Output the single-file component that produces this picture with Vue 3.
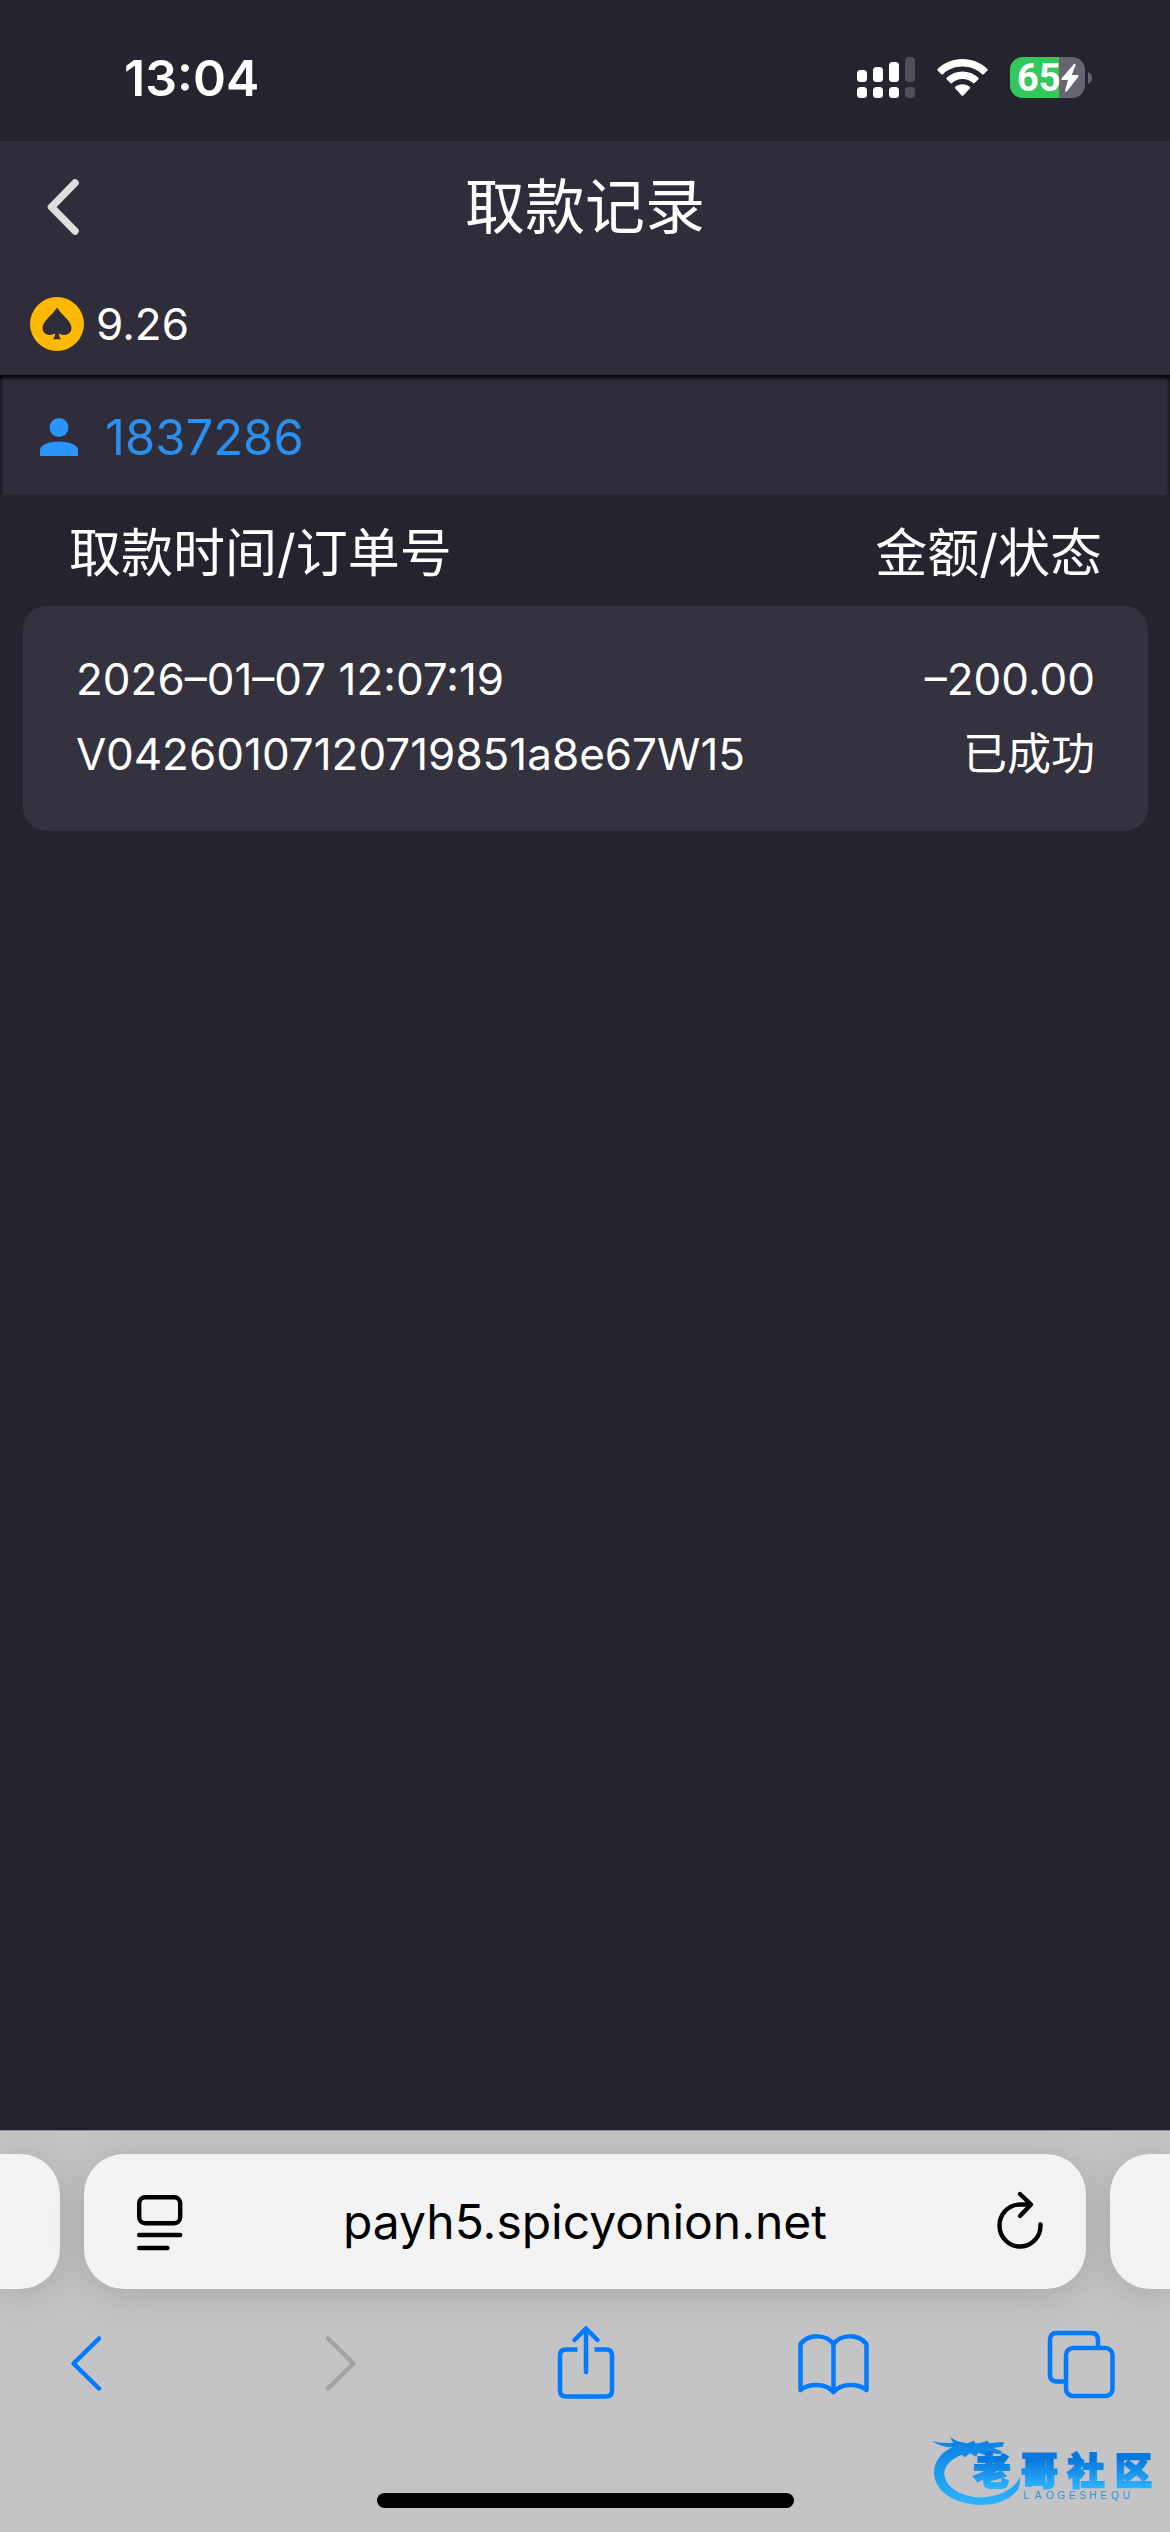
<script setup>
const account = { balance: '9.26', id: '1837286' }
const records = [
  {
    time: '2026–01–07 12:07:19',
    order: 'V04260107120719851a8e67W15',
    amount: '–200.00',
    status: '已成功',
  },
]
const battery = 65
</script>

<template>
  <div class="screen">
    <div class="status-bar">
      <time class="clock">13:04</time>
      <div class="indicators">
        <svg class="signal" viewBox="0 0 58 41" aria-label="信号">
          <g fill="#fff">
            <rect x="0" y="13" width="10" height="12" rx="3.5" />
            <rect x="16" y="10" width="10" height="15" rx="3.5" />
            <rect x="32" y="5" width="10" height="20" rx="3.5" />
            <rect x="0" y="30" width="10" height="11" rx="3.5" />
            <rect x="16" y="30" width="10" height="11" rx="3.5" />
            <rect x="32" y="30" width="10" height="11" rx="3.5" />
          </g>
          <g fill="#504f59">
            <rect x="48" y="0" width="10" height="25" rx="3.5" />
            <rect x="48" y="30" width="10" height="11" rx="3.5" />
          </g>
        </svg>
        <svg class="wifi" viewBox="0 0 51 37" aria-label="Wi-Fi">
          <g fill="#fff">
            <path d="M25.500 0C35 0 43.500 3.600 50.200 9.700Q51.200 10.700 50.200 11.700L46.700 15.200Q45.900 16 45 15.200C39.700 10.300 33 7.600 25.500 7.600S11.300 10.300 6 15.200Q5.100 16 4.300 15.200L.8 11.700Q-.2 10.700.8 9.700C7.500 3.600 16 0 25.500 0Z" />
            <path d="M25.500 12.600C31.500 12.600 36.900 14.800 41.200 18.600Q42.100 19.500 41.200 20.500L37.600 24Q36.800 24.800 35.900 24C33 21.500 29.500 20.100 25.500 20.100S18 21.500 15.100 24Q14.200 24.800 13.400 24L9.800 20.500Q8.900 19.500 9.800 18.600C14.100 14.800 19.500 12.600 25.500 12.600Z" />
            <path d="M25.500 25.300C28.300 25.300 30.800 26.200 32.700 27.800Q33.600 28.700 32.700 29.600L26.600 36.200Q25.500 37.200 24.400 36.200L18.300 29.600Q17.400 28.700 18.300 27.800C20.200 26.200 22.700 25.300 25.500 25.300Z" />
          </g>
        </svg>
        <div class="battery">
          <div class="cell">
            <div class="charge" :style="{ width: battery + '%' }"></div>
            <span class="level">{{ battery }}</span>
            <svg class="bolt" viewBox="0 0 20 30" aria-hidden="true">
              <path d="M14 1L1.500 15.500Q.8 16.800 2 16.900H8L5 27.500Q5 29.500 6.800 28.400L18.500 13.600Q19 12.200 17.700 12H11.800L15.500 2.200Q15.500 .2 14 1Z" fill="#fff" />
            </svg>
          </div>
          <svg class="nub" viewBox="0 0 4 12" aria-hidden="true">
            <path d="M0 0Q4 1.500 4 6T0 12Z" fill="#66656f" />
          </svg>
        </div>
      </div>
    </div>

    <header class="header">
      <div class="nav">
        <button class="back" type="button" aria-label="返回">
          <svg viewBox="0 0 32 56">
            <path d="M28 4L4.500 28L28 52" fill="none" stroke="#dedede" stroke-width="7.500" stroke-linecap="round" stroke-linejoin="round" />
          </svg>
        </button>
        <h1 class="title">取款记录</h1>
      </div>
      <div class="balance">
        <svg class="coin" viewBox="0 0 54 54" aria-hidden="true">
          <circle cx="27" cy="27" r="27" fill="#ffb900" />
          <path d="M27 10.500C31 17.500 41.500 24 41.500 31C41.500 37.500 33.500 40 28.800 36.300Q29 40 31 42.300H23Q25 40 25.200 36.300C20.500 40 12.500 37.500 12.500 31C12.500 24 23 17.500 27 10.500Z" fill="#2e2d39" />
        </svg>
        <span>{{ account.balance }}</span>
      </div>
    </header>

    <div class="user">
      <svg class="person" viewBox="0 0 38 38" aria-hidden="true">
        <circle cx="19" cy="9.500" r="9.500" fill="#2a94ff" />
        <path d="M0 38V32C0 27 9 23.500 19 23.500S38 27 38 32V38Z" fill="#2a94ff" />
      </svg>
      <span>{{ account.id }}</span>
    </div>

    <main class="content">
      <table class="records">
        <thead>
          <tr>
            <th scope="col">取款时间/订单号</th>
            <th scope="col">金额/状态</th>
          </tr>
        </thead>
        <tbody>
          <tr v-for="record in records" :key="record.order">
            <td>
              <div>{{ record.time }}</div>
              <div>{{ record.order }}</div>
            </td>
            <td>
              <div>{{ record.amount }}</div>
              <div>{{ record.status }}</div>
            </td>
          </tr>
        </tbody>
      </table>
    </main>

    <footer class="browser">
      <div class="tabs">
        <div class="neighbour previous"></div>
        <div class="address">
          <button type="button" aria-label="页面设置">
            <svg viewBox="0 0 72 72" fill="none" stroke="#000" stroke-width="4.400" stroke-linecap="round">
              <rect x="17.200" y="11.200" width="41" height="26" rx="6" />
              <path d="M17.200 49H58.200M17.200 62H45.500" />
            </svg>
          </button>
          <input type="text" aria-label="网址" value="payh5.spicyonion.net" readonly />
          <button type="button" aria-label="重新加载">
            <svg viewBox="0 0 72 72" fill="none" stroke="#000" stroke-width="4.400" stroke-linecap="round" stroke-linejoin="round">
              <path d="M64.500 38.500A20.500 21 0 1 1 44 18.500H54" />
              <path d="M44 8L55 18.500L44 30" />
            </svg>
          </button>
        </div>
        <div class="neighbour next"></div>
      </div>

      <nav class="tools">
        <button type="button" aria-label="后退">
          <svg viewBox="0 0 72 76">
            <path d="M50 13.500L24.500 38.500L50 63.500" />
          </svg>
        </button>
        <button type="button" aria-label="前进" disabled>
          <svg viewBox="0 0 72 76">
            <path d="M29 13.500L54.500 38.500L29 63.500" />
          </svg>
        </button>
        <button type="button" aria-label="分享">
          <svg viewBox="0 0 72 76">
            <path d="M29.500 24.500H18Q12 24.500 12 30.500V65.500Q12 71.500 18 71.500H58Q64 71.500 64 65.500V30.500Q64 24.500 58 24.500H46.500" stroke-linecap="butt" />
            <path d="M38 47V4.500M26.500 15L38 3.500L49.500 15" />
          </svg>
        </button>
        <button type="button" aria-label="书签">
          <svg viewBox="0 0 72 76">
            <path d="M35.500 19.500C29 9 11 8.500 2.500 19V65C11 58 28 58 35.500 67C43 58 60 58 68.500 65V19C60 8.500 42 9 35.500 19.500V67" />
          </svg>
        </button>
        <button type="button" aria-label="标签页">
          <svg viewBox="0 0 72 76">
            <path d="M18 56.500H10Q3 56.500 3 49.500V15Q3 8 10 8H44Q51 8 51 15V22" stroke-linecap="butt" />
            <rect x="19" y="23" width="46.500" height="48" rx="7" />
          </svg>
        </button>
      </nav>
      <div class="home-indicator"></div>

      <svg class="watermark" viewBox="0 0 780 300" role="img" aria-label="老哥社区">
        <defs>
          <linearGradient id="arc" gradientUnits="userSpaceOnUse" x1="0" y1="55" x2="0" y2="255">
            <stop offset="0" stop-color="#0a80e0" />
            <stop offset="1" stop-color="#2eb4ff" />
          </linearGradient>
          <linearGradient id="word" gradientUnits="userSpaceOnUse" x1="0" y1="118" x2="0" y2="205">
            <stop offset="0" stop-color="#0878dc" />
            <stop offset="1" stop-color="#2cb4ff" />
          </linearGradient>
        </defs>
        <path fill="url(#arc)" d="M66 63Q95 72 130 68L120 52Q145 68 172 70L192 62L196 70Q215 70 232 62L238 70Q262 66 282 67L278 80L250 84L276 94L272 103L238 98L230 107L205 98L198 110L180 100L165 112L155 104C118 120 102 140 103 162C106 205 160 232 215 232C270 230 315 205 329 172Q332 190 325 207C300 240 260 255 210 255C130 253 74 212 72 160C71 125 95 95 128 82Q95 82 66 63Z" />
        <text class="brand" x="190 332 472 614" y="196" fill="url(#word)" stroke="url(#word)">老哥社区</text>
        <text class="roman" x="340 374 408 442 476 508 538 571 603 638" y="236" fill="#2d91dc">LAOGESHEQU</text>
      </svg>
    </footer>
  </div>
</template>

<style>
body {
  margin: 0;
  background: #24242e;
}
</style>

<style scoped>
.screen {
  display: flex;
  flex-direction: column;
  min-height: 100vh;
  background: #24242e;
  color: #fff;
  font-family: Inter, "Noto Sans CJK SC", sans-serif;
  font-weight: 400;
}

button {
  display: flex;
  padding: 0;
  border: 0;
  background: none;
}

svg {
  display: block;
}

.status-bar {
  display: flex;
  align-items: center;
  justify-content: space-between;
  height: 141px;
  padding: 0 78px 0 124px;
  box-sizing: border-box;
}

.clock {
  padding-top: 14px;
  font-size: 50px;
  line-height: 60px;
  font-weight: 600;
}

.indicators {
  display: flex;
  align-items: center;
  gap: 22px;
  padding-top: 14px;
}

.signal {
  width: 58px;
  height: 41px;
}

.wifi {
  width: 51px;
  height: 37px;
}

.battery {
  display: flex;
  align-items: center;
  gap: 3px;
}

.cell {
  position: relative;
  display: flex;
  align-items: center;
  width: 75px;
  height: 41px;
  border-radius: 13px;
  background: #66656f;
}

.charge {
  position: absolute;
  inset: 0 auto 0 0;
  border-radius: 13px 0 0 13px;
  background: #34c759;
}

.level {
  position: relative;
  padding-left: 7px;
  font-family: Roboto, sans-serif;
  font-size: 38px;
  line-height: 44px;
  font-weight: 700;
}

.bolt {
  position: absolute;
  right: 5px;
  width: 20px;
  height: 30px;
}

.nub {
  width: 4px;
  height: 12px;
}

.header {
  background: #2e2d39;
}

.nav {
  display: grid;
  grid-template-columns: 1fr auto 1fr;
  align-items: center;
  height: 132px;
  padding: 0 47px;
}

.back svg {
  width: 32px;
  height: 56px;
}

.title {
  margin: 0;
  font-size: 60px;
  line-height: 84px;
  font-weight: 400;
}

.balance {
  display: flex;
  align-items: center;
  gap: 12px;
  height: 102px;
  padding: 0 30px;
  font-size: 44px;
}

.coin {
  width: 54px;
  height: 54px;
}

.user {
  display: flex;
  align-items: center;
  gap: 27px;
  height: 120px;
  padding: 4px 40px 0;
  box-sizing: border-box;
  background: #2e2d39;
  box-shadow: inset 0 3px 4px #000;
  color: #2a8fee;
  font-size: 49px;
}

.person {
  width: 38px;
  height: 38px;
}

.content {
  flex: 1;
  padding: 0 22px 0 23px;
}

.records {
  width: 100%;
  border-spacing: 0;
  text-align: left;
}

.records th {
  height: 111px;
  padding: 6px 46px 0;
  box-sizing: border-box;
  font-size: 52px;
  line-height: 72px;
  font-weight: 400;
}

.records td {
  padding: 36px 53px 39px;
  background: #33323e;
  font-size: 44px;
  line-height: 75px;
}

.records th:last-child,
.records td:last-child {
  text-align: right;
}

.records td:first-child {
  border-radius: 24px 0 0 24px;
}

.records td:last-child {
  border-radius: 0 24px 24px 0;
}

.browser {
  position: relative;
  border-top: 1px solid #8e8e93;
  background: #c4c4c6;
  overflow: hidden;
}

.tabs {
  display: flex;
  gap: 24px;
  padding-top: 23px;
}

.address,
.neighbour {
  height: 135px;
  background: #f3f3f3;
  box-shadow: 0 6px 40px rgba(0, 0, 0, 0.14);
}

.neighbour {
  width: 60px;
}

.previous {
  border-radius: 0 40px 40px 0;
}

.next {
  border-radius: 40px 0 0 40px;
}

.address {
  display: flex;
  flex: 1;
  align-items: center;
  min-width: 0;
  padding: 0 38px;
  border-radius: 40px;
}

.address svg {
  width: 72px;
  height: 72px;
}

.address input {
  flex: 1;
  min-width: 0;
  padding: 0;
  border: 0;
  background: none;
  color: #000;
  font-family: inherit;
  font-size: 48px;
  font-weight: 400;
  text-align: center;
}

.tools {
  display: flex;
  justify-content: space-between;
  padding: 36px 51px 0 49px;
}

.tools svg {
  width: 72px;
  height: 76px;
  fill: none;
  stroke: #007aff;
  stroke-width: 4.5;
  stroke-linecap: round;
  stroke-linejoin: round;
}

.tools button:disabled svg {
  stroke: #a3a3a5;
}

.home-indicator {
  width: 417px;
  height: 15px;
  margin: 92px auto 24px;
  border-radius: 8px;
  background: #000;
}

.watermark {
  position: absolute;
  right: 0;
  bottom: 12px;
  width: 260px;
  height: 100px;
}

.brand {
  font-family: "Noto Sans CJK SC", sans-serif;
  font-size: 111px;
  font-weight: 900;
  stroke-width: 6px;
}

.roman {
  font-family: "Liberation Sans", sans-serif;
  font-size: 30px;
  font-weight: 400;
}
</style>
